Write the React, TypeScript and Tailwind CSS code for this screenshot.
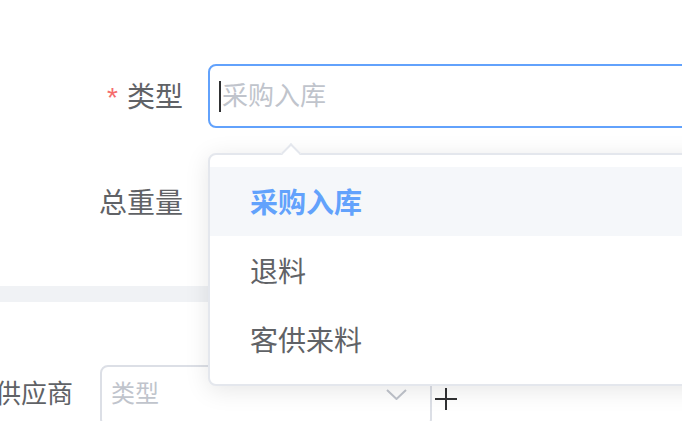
const options = ["采购入库", "退料", "客供来料"];

const App = () => {
  return (
    <div
      className="relative h-[421px] w-[682px] overflow-hidden bg-white"
      style={{ fontFamily: '"Liberation Sans", "Noto Sans CJK SC", sans-serif' }}
    >
      {/* TOP FORM */}
      <div className="pt-[64px]">
        {/* TYPE */}
        <div className="flex h-16 items-center">
          <div className="flex w-[208px] shrink-0 items-center justify-end pr-[25px] pt-[3px] text-[28px] text-[#606266]">
            <span className="mr-[9px] text-[#f56c6c]">*</span>
            <span>类型</span>
          </div>
          <div className="flex h-16 w-[600px] shrink-0 items-center rounded-[8px] border-2 border-[#62a2fc] pl-[9px]">
            <span className="inline-block h-[31px] w-[2px] bg-[#303133]" />
            <span className="ml-[1px] text-[26px] text-[#c0c4cc]">采购入库</span>
          </div>
        </div>

        {/* WEIGHT */}
        <div className="mt-[42px] flex h-16 items-center">
          <div className="flex w-[208px] shrink-0 justify-end pr-[25px] pt-[3px] text-[28px] text-[#606266]">
            总重量
          </div>
        </div>
      </div>

      {/* DIVIDER BAND */}
      <div className="mt-[52px] h-4 bg-[#f0f2f5]" />

      {/* SUPPLIER */}
      <div className="mt-[63px] flex items-start">
        <div className="flex h-[58px] w-[100px] shrink-0 items-center justify-end pr-[27px] text-[26px] text-[#606266]">
          <span className="whitespace-nowrap">供应商</span>
        </div>
        <div className="flex h-[62px] w-[332px] shrink-0 items-center justify-between rounded-[8px] border-2 border-[#dcdfe6] pb-[4px] pl-[9px] pr-[23px]">
          <span className="text-[24px] text-[#c0c4cc]">类型</span>
          <svg width="21" height="11" viewBox="0 0 21 11" fill="none">
            <path d="M1 1l9.5 9 9.5-9" stroke="#c0c4cc" strokeWidth="2" />
          </svg>
        </div>
        <svg className="ml-[2px] mt-[22px]" width="24" height="24" viewBox="0 0 24 24" fill="none">
          <path d="M12 1v22M1 12h22" stroke="#303133" strokeWidth="2" />
        </svg>
      </div>

      {/* DROPDOWN */}
      <div className="absolute left-[208px] top-[153px] w-[600px] rounded-[8px] border-2 border-[#e4e7ed] bg-white pb-[10px] pt-[12px] shadow-[0_4px_24px_rgba(0,0,0,0.1)]">
        <div className="absolute left-[74px] top-[-9px] h-[14px] w-[14px] rotate-45 border-l-2 border-t-2 border-[#e4e7ed] bg-white" />
        {options.map((item, i) => (
          <div
            key={item}
            className={
              i === 0
                ? "relative flex h-[69px] items-center bg-[#f5f7fa] px-[40px] pt-[4px] text-[28px] font-bold text-[#62a2fc]"
                : "relative flex h-[69px] items-center px-[40px] pt-[4px] text-[28px] text-[#606266]"
            }
          >
            {item}
          </div>
        ))}
      </div>
    </div>
  );
};

export default App;
